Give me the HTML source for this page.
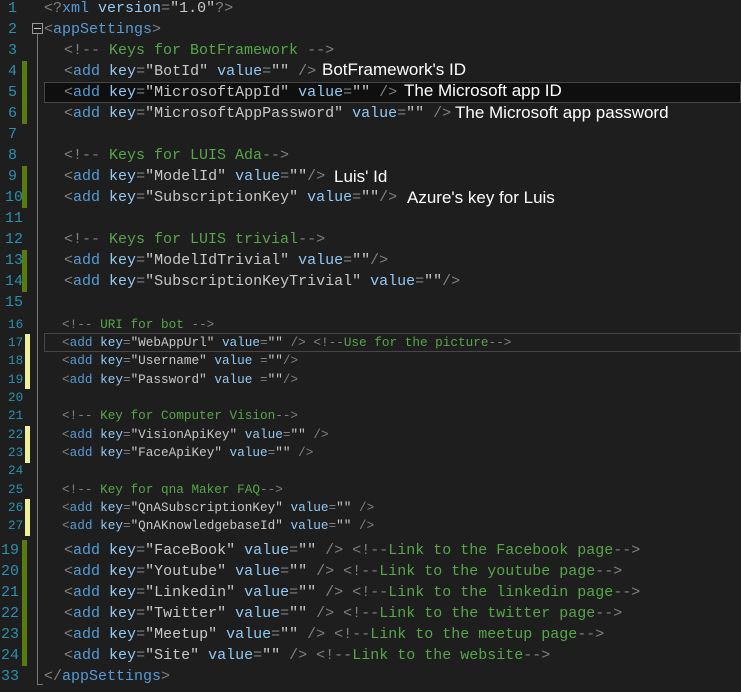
<!DOCTYPE html>
<html><head><meta charset="utf-8"><style>
body{margin:0;width:741px;height:692px;background:#1e1e1e;overflow:hidden;position:relative;font-family:"Liberation Mono",monospace}
.l{position:absolute;white-space:pre;color:#c8c8c8}
.A{font-size:15px;line-height:21px;height:21px}
.B{font-size:12.7px;line-height:18.3px;height:18.3px}
.n{position:absolute;color:#2b91af;white-space:pre}
.t{color:#808080}.e{color:#569cd6}.a{color:#92caf4}.s{color:#c8c8c8}.c{color:#57a64a}
.ann{position:absolute;font-family:"Liberation Sans",sans-serif;font-size:17px;color:#fff;white-space:pre;line-height:21px}
.bar{position:absolute;width:5px}
.g{background:#587c0c}.y{background:#eff09c}
.hl{position:absolute;left:44px;right:0;border:1px solid #464646;box-sizing:border-box;background:#0f0f0f}
</style></head><body>
<div class="hl" style="top:82px;height:21px"></div>
<div class="hl" style="top:333px;height:19px;background:#1e1e1e"></div>

<!-- gutter bars -->
<div class="bar g" style="left:22px;top:61px;height:63px"></div>
<div class="bar g" style="left:22px;top:166px;height:42px"></div>
<div class="bar g" style="left:22px;top:250px;height:42px"></div>
<div class="bar y" style="left:25px;top:334px;height:55px"></div>
<div class="bar y" style="left:25px;top:426px;height:37px"></div>
<div class="bar y" style="left:25px;top:499px;height:37px"></div>
<div class="bar g" style="left:22px;top:540px;height:126px"></div>

<!-- fold box and guide -->
<div style="position:absolute;left:32px;top:23px;width:9px;height:9px;border:1px solid #999;box-sizing:content-box"></div>
<div style="position:absolute;left:34px;top:28px;width:7px;height:1px;background:#ccc"></div>
<div style="position:absolute;left:37px;top:34px;width:1px;height:651px;background:#777"></div>
<div style="position:absolute;left:37px;top:684px;width:6px;height:1px;background:#777"></div>

<!-- Section A numbers -->
<div class="n A" style="left:8px;top:-2px">1</div>
<div class="n A" style="left:8px;top:19px">2</div>
<div class="n A" style="left:8px;top:40px">3</div>
<div class="n A" style="left:8px;top:61px">4</div>
<div class="n A" style="left:8px;top:82px">5</div>
<div class="n A" style="left:8px;top:103px">6</div>
<div class="n A" style="left:8px;top:124px">7</div>
<div class="n A" style="left:8px;top:145px">8</div>
<div class="n A" style="left:8px;top:166px">9</div>
<div class="n A" style="left:5px;top:187px">10</div>
<div class="n A" style="left:5px;top:208px">11</div>
<div class="n A" style="left:5px;top:229px">12</div>
<div class="n A" style="left:5px;top:250px">13</div>
<div class="n A" style="left:5px;top:271px">14</div>
<div class="n A" style="left:5px;top:292px">15</div>

<div class="l A" style="left:44px;top:-2px"><span class="t">&lt;?</span><span class="e">xml</span> <span class="a">version</span><span class="t">=</span>"1.0"<span class="t">?&gt;</span></div>
<div class="l A" style="left:44px;top:19px"><span class="t">&lt;</span><span class="e">appSettings</span><span class="t">&gt;</span></div>
<div class="l A" style="left:64px;top:40px"><span class="t">&lt;!--</span><span class="c"> Keys for BotFramework </span><span class="t">--&gt;</span></div>
<div class="l A" style="left:64px;top:61px"><span class="t">&lt;</span><span class="e">add</span> <span class="a">key</span><span class="t">=</span>"BotId" <span class="a">value</span><span class="t">=</span>"" <span class="t">/&gt;</span></div>
<div class="l A" style="left:64px;top:82px"><span class="t">&lt;</span><span class="e">add</span> <span class="a">key</span><span class="t">=</span>"MicrosoftAppId" <span class="a">value</span><span class="t">=</span>"" <span class="t">/&gt;</span></div>
<div class="l A" style="left:64px;top:103px"><span class="t">&lt;</span><span class="e">add</span> <span class="a">key</span><span class="t">=</span>"MicrosoftAppPassword" <span class="a">value</span><span class="t">=</span>"" <span class="t">/&gt;</span></div>
<div class="l A" style="left:64px;top:145px"><span class="t">&lt;!--</span><span class="c"> Keys for LUIS Ada</span><span class="t">--&gt;</span></div>
<div class="l A" style="left:64px;top:166px"><span class="t">&lt;</span><span class="e">add</span> <span class="a">key</span><span class="t">=</span>"ModelId" <span class="a">value</span><span class="t">=</span>""<span class="t">/&gt;</span></div>
<div class="l A" style="left:64px;top:187px"><span class="t">&lt;</span><span class="e">add</span> <span class="a">key</span><span class="t">=</span>"SubscriptionKey" <span class="a">value</span><span class="t">=</span>""<span class="t">/&gt;</span></div>
<div class="l A" style="left:64px;top:229px"><span class="t">&lt;!--</span><span class="c"> Keys for LUIS trivial</span><span class="t">--&gt;</span></div>
<div class="l A" style="left:64px;top:250px"><span class="t">&lt;</span><span class="e">add</span> <span class="a">key</span><span class="t">=</span>"ModelIdTrivial" <span class="a">value</span><span class="t">=</span>""<span class="t">/&gt;</span></div>
<div class="l A" style="left:64px;top:271px"><span class="t">&lt;</span><span class="e">add</span> <span class="a">key</span><span class="t">=</span>"SubscriptionKeyTrivial" <span class="a">value</span><span class="t">=</span>""<span class="t">/&gt;</span></div>

<div class="ann" style="left:322px;top:59px">BotFramework's ID</div>
<div class="ann" style="left:404px;top:80px">The Microsoft app ID</div>
<div class="ann" style="left:455px;top:102px">The Microsoft app password</div>
<div class="ann" style="left:334px;top:166px">Luis' Id</div>
<div class="ann" style="left:407px;top:187px">Azure's key for Luis</div>

<!-- Section B -->
<div class="n B" style="left:8px;top:316px">16</div>
<div class="n B" style="left:8px;top:334px">17</div>
<div class="n B" style="left:8px;top:352px">18</div>
<div class="n B" style="left:8px;top:371px">19</div>
<div class="n B" style="left:8px;top:389px">20</div>
<div class="n B" style="left:8px;top:407px">21</div>
<div class="n B" style="left:8px;top:426px">22</div>
<div class="n B" style="left:8px;top:444px">23</div>
<div class="n B" style="left:8px;top:462px">24</div>
<div class="n B" style="left:8px;top:481px">25</div>
<div class="n B" style="left:8px;top:499px">26</div>
<div class="n B" style="left:8px;top:517px">27</div>

<div class="l B" style="left:62px;top:316px"><span class="t">&lt;!--</span><span class="c"> URI for bot </span><span class="t">--&gt;</span></div>
<div class="l B" style="left:62px;top:334px"><span class="t">&lt;</span><span class="e">add</span> <span class="a">key</span><span class="t">=</span>"WebAppUrl" <span class="a">value</span><span class="t">=</span>"" <span class="t">/&gt;</span> <span class="t">&lt;!--</span><span class="c">Use for the picture</span><span class="t">--&gt;</span></div>
<div class="l B" style="left:62px;top:352px"><span class="t">&lt;</span><span class="e">add</span> <span class="a">key</span><span class="t">=</span>"Username" <span class="a">value</span> <span class="t">=</span>""<span class="t">/&gt;</span></div>
<div class="l B" style="left:62px;top:371px"><span class="t">&lt;</span><span class="e">add</span> <span class="a">key</span><span class="t">=</span>"Password" <span class="a">value</span> <span class="t">=</span>""<span class="t">/&gt;</span></div>
<div class="l B" style="left:62px;top:407px"><span class="t">&lt;!--</span><span class="c"> Key for Computer Vision</span><span class="t">--&gt;</span></div>
<div class="l B" style="left:62px;top:426px"><span class="t">&lt;</span><span class="e">add</span> <span class="a">key</span><span class="t">=</span>"VisionApiKey" <span class="a">value</span><span class="t">=</span>"" <span class="t">/&gt;</span></div>
<div class="l B" style="left:62px;top:444px"><span class="t">&lt;</span><span class="e">add</span> <span class="a">key</span><span class="t">=</span>"FaceApiKey" <span class="a">value</span><span class="t">=</span>"" <span class="t">/&gt;</span></div>
<div class="l B" style="left:62px;top:481px"><span class="t">&lt;!--</span><span class="c"> Key for qna Maker FAQ</span><span class="t">--&gt;</span></div>
<div class="l B" style="left:62px;top:499px"><span class="t">&lt;</span><span class="e">add</span> <span class="a">key</span><span class="t">=</span>"QnASubscriptionKey" <span class="a">value</span><span class="t">=</span>"" <span class="t">/&gt;</span></div>
<div class="l B" style="left:62px;top:517px"><span class="t">&lt;</span><span class="e">add</span> <span class="a">key</span><span class="t">=</span>"QnAKnowledgebaseId" <span class="a">value</span><span class="t">=</span>"" <span class="t">/&gt;</span></div>

<!-- Section C -->
<div class="n A" style="left:1px;top:540px">19</div>
<div class="n A" style="left:1px;top:561px">20</div>
<div class="n A" style="left:1px;top:582px">21</div>
<div class="n A" style="left:1px;top:603px">22</div>
<div class="n A" style="left:1px;top:624px">23</div>
<div class="n A" style="left:1px;top:645px">24</div>
<div class="n A" style="left:1px;top:666px">33</div>

<div class="l A" style="left:64px;top:540px"><span class="t">&lt;</span><span class="e">add</span> <span class="a">key</span><span class="t">=</span>"FaceBook" <span class="a">value</span><span class="t">=</span>"" <span class="t">/&gt;</span> <span class="t">&lt;!--</span><span class="c">Link to the Facebook page</span><span class="t">--&gt;</span></div>
<div class="l A" style="left:64px;top:561px"><span class="t">&lt;</span><span class="e">add</span> <span class="a">key</span><span class="t">=</span>"Youtube" <span class="a">value</span><span class="t">=</span>"" <span class="t">/&gt;</span> <span class="t">&lt;!--</span><span class="c">Link to the youtube page</span><span class="t">--&gt;</span></div>
<div class="l A" style="left:64px;top:582px"><span class="t">&lt;</span><span class="e">add</span> <span class="a">key</span><span class="t">=</span>"Linkedin" <span class="a">value</span><span class="t">=</span>"" <span class="t">/&gt;</span> <span class="t">&lt;!--</span><span class="c">Link to the linkedin page</span><span class="t">--&gt;</span></div>
<div class="l A" style="left:64px;top:603px"><span class="t">&lt;</span><span class="e">add</span> <span class="a">key</span><span class="t">=</span>"Twitter" <span class="a">value</span><span class="t">=</span>"" <span class="t">/&gt;</span> <span class="t">&lt;!--</span><span class="c">Link to the twitter page</span><span class="t">--&gt;</span></div>
<div class="l A" style="left:64px;top:624px"><span class="t">&lt;</span><span class="e">add</span> <span class="a">key</span><span class="t">=</span>"Meetup" <span class="a">value</span><span class="t">=</span>"" <span class="t">/&gt;</span> <span class="t">&lt;!--</span><span class="c">Link to the meetup page</span><span class="t">--&gt;</span></div>
<div class="l A" style="left:64px;top:645px"><span class="t">&lt;</span><span class="e">add</span> <span class="a">key</span><span class="t">=</span>"Site" <span class="a">value</span><span class="t">=</span>"" <span class="t">/&gt;</span> <span class="t">&lt;!--</span><span class="c">Link to the website</span><span class="t">--&gt;</span></div>
<div class="l A" style="left:44px;top:666px"><span class="t">&lt;/</span><span class="e">appSettings</span><span class="t">&gt;</span></div>
</body></html>
